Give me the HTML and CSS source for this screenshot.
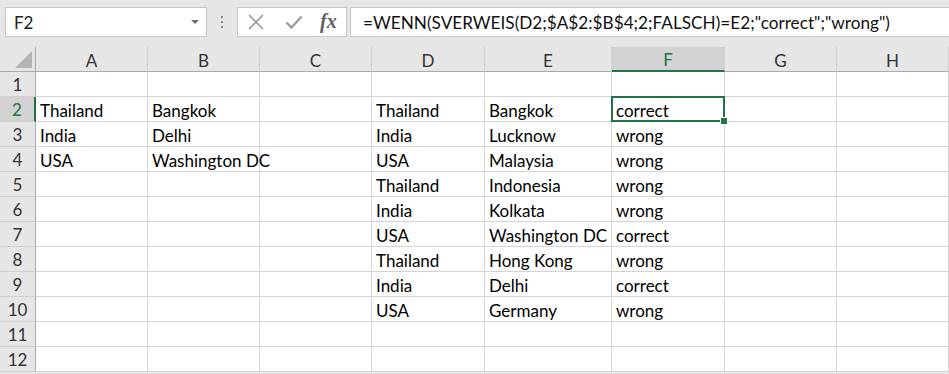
FILE: index.html
```html
<!DOCTYPE html>
<html>
<head>
<meta charset="utf-8">
<link rel="stylesheet" href="styles.css">
</head>
<body>
<div class="toolbar">
  <div class="namebox">
    <span class="name">F2</span>
    <svg class="caret" width="8" height="5" viewBox="0 0 8 5"><path d="M0 0H8L4 4Z" fill="#6b6b6b"/></svg>
  </div>
  <div class="dots"><i></i><i></i><i></i></div>
  <div class="fxbox">
    <svg class="ic" width="18" height="16" viewBox="0 0 18 16"><path d="M2 1L16 15M16 1L2 15" stroke="#9c9c9c" stroke-width="1.6" fill="none"/></svg>
    <svg class="ic" width="18" height="16" viewBox="0 0 18 16"><path d="M1.5 8.5L6.5 13.5L16.5 2.5" stroke="#9c9c9c" stroke-width="2.4" fill="none"/></svg>
    <span class="fx">fx</span>
  </div>
  <div class="formula">=WENN(SVERWEIS(D2;$A$2:$B$4;2;FALSCH)=E2;"correct";"wrong")</div>
</div>
<div class="sheet">
  <div class="hd corner"><svg width="18" height="18" viewBox="0 0 18 18"><path d="M17 0V17H0Z" fill="#b5b5b5"/></svg></div>
  <div class="hd col">A</div><div class="hd col">B</div><div class="hd col">C</div><div class="hd col">D</div><div class="hd col">E</div><div class="hd col sel">F</div><div class="hd col">G</div><div class="hd col">H</div>

  <div class="hd row">1</div><div class="c"></div><div class="c"></div><div class="c"></div><div class="c"></div><div class="c"></div><div class="c"></div><div class="c"></div><div class="c"></div>
  <div class="hd row rsel">2</div><div class="c">Thailand</div><div class="c">Bangkok</div><div class="c"></div><div class="c">Thailand</div><div class="c">Bangkok</div><div class="c active">correct</div><div class="c"></div><div class="c"></div>
  <div class="hd row">3</div><div class="c">India</div><div class="c">Delhi</div><div class="c"></div><div class="c">India</div><div class="c">Lucknow</div><div class="c">wrong</div><div class="c"></div><div class="c"></div>
  <div class="hd row">4</div><div class="c">USA</div><div class="c">Washington DC</div><div class="c"></div><div class="c">USA</div><div class="c">Malaysia</div><div class="c">wrong</div><div class="c"></div><div class="c"></div>
  <div class="hd row">5</div><div class="c"></div><div class="c"></div><div class="c"></div><div class="c">Thailand</div><div class="c">Indonesia</div><div class="c">wrong</div><div class="c"></div><div class="c"></div>
  <div class="hd row">6</div><div class="c"></div><div class="c"></div><div class="c"></div><div class="c">India</div><div class="c">Kolkata</div><div class="c">wrong</div><div class="c"></div><div class="c"></div>
  <div class="hd row">7</div><div class="c"></div><div class="c"></div><div class="c"></div><div class="c">USA</div><div class="c">Washington DC</div><div class="c">correct</div><div class="c"></div><div class="c"></div>
  <div class="hd row">8</div><div class="c"></div><div class="c"></div><div class="c"></div><div class="c">Thailand</div><div class="c">Hong Kong</div><div class="c">wrong</div><div class="c"></div><div class="c"></div>
  <div class="hd row">9</div><div class="c"></div><div class="c"></div><div class="c"></div><div class="c">India</div><div class="c">Delhi</div><div class="c">correct</div><div class="c"></div><div class="c"></div>
  <div class="hd row">10</div><div class="c"></div><div class="c"></div><div class="c"></div><div class="c">USA</div><div class="c">Germany</div><div class="c">wrong</div><div class="c"></div><div class="c"></div>
  <div class="hd row">11</div><div class="c"></div><div class="c"></div><div class="c"></div><div class="c"></div><div class="c"></div><div class="c"></div><div class="c"></div><div class="c"></div>
  <div class="hd row">12</div><div class="c"></div><div class="c"></div><div class="c"></div><div class="c"></div><div class="c"></div><div class="c"></div><div class="c"></div><div class="c"></div>
</div>
</body>
</html>
```

FILE: styles.css
```css
* { box-sizing: border-box; }
html, body { margin: 0; padding: 0; }
body {
  width: 949px;
  height: 374px;
  overflow: hidden;
  background: #e6e6e6;
  font-family: Lato, "Liberation Sans", sans-serif;
  font-size: 17px;
  color: #000;
}
.toolbar {
  height: 47px;
  display: flex;
  align-items: flex-start;
  padding: 7px 0 0 5px;
}
.namebox {
  width: 202px;
  height: 30px;
  background: #fff;
  border: 1px solid #c6c6c6;
  display: flex;
  align-items: center;
  justify-content: space-between;
  padding: 0 7px 0 8px;
}
.name { color: #222; }
.caret { margin-top: 1px; }
.dots {
  width: 30px;
  height: 30px;
  display: flex;
  flex-direction: column;
  align-items: center;
  justify-content: center;
  gap: 3px;
}
.dots i { display: block; width: 2px; height: 2px; background: #8a8a8a; }
.fxbox {
  width: 110px;
  height: 30px;
  background: #fff;
  border: 1px solid #c6c6c6;
  display: flex;
  align-items: center;
  padding-left: 9px;
  gap: 20px;
}
.fx {
  font-family: "Liberation Serif", serif;
  font-style: italic;
  font-weight: bold;
  font-size: 20px;
  color: #5f5f5f;
  margin-left: -3px;
  margin-top: -2px;
}
.formula {
  margin-left: 3px;
  flex: 1;
  height: 30px;
  background: #fff;
  border: 1px solid #c6c6c6;
  border-right: 0;
  display: flex;
  align-items: center;
  padding-left: 12px;
  color: #111;
  font-size: 17.2px;
  white-space: nowrap;
}
.sheet {
  display: grid;
  grid-template-columns: 36px 112px 112px 112px 113px 127px 113px 112px 112px;
  grid-template-rows: 25px;
  grid-auto-rows: 25px;
  background: #fff;
}
.hd {
  background: #e6e6e6;
  color: #333;
  display: flex;
  align-items: center;
  justify-content: center;
}
.corner {
  border-right: 1px solid #ababab;
  border-bottom: 1px solid #ababab;
  align-items: flex-end;
  justify-content: flex-end;
  padding: 0 2px 2px 0;
}
.col {
  border-right: 1px solid #cfcfcf;
  border-bottom: 1px solid #ababab;
  padding-top: 2px;
}
.row {
  border-right: 1px solid #ababab;
  border-bottom: 1px solid #cfcfcf;
  padding-top: 1px;
}
.sel {
  background: #d2d2d2;
  color: #217346;
  border-bottom: 2px solid #217346;
}
.rsel {
  background: #d2d2d2;
  color: #217346;
  border-right: 2px solid #217346;
}
.c {
  border-right: 1px solid #d4d4d4;
  border-bottom: 1px solid #d4d4d4;
  display: flex;
  align-items: center;
  padding: 2px 0 0 4px;
  white-space: nowrap;
}
.active {
  position: relative;
}
.active::before {
  content: "";
  position: absolute;
  left: -1px;
  top: -1px;
  right: -1px;
  bottom: -1px;
  border: 2px solid #217346;
}
.active::after {
  content: "";
  position: absolute;
  right: -4px;
  bottom: -4px;
  width: 6px;
  height: 6px;
  background: #217346;
  border: 1px solid #fff;
}
```
